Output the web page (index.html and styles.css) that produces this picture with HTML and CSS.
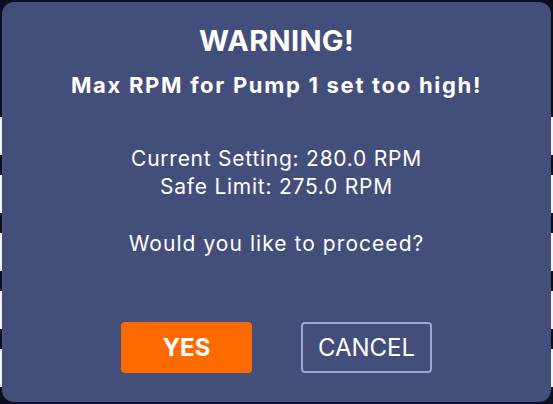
FILE: index.html
```html
<!DOCTYPE html>
<html lang="en">
<head>
  <meta charset="UTF-8">
  <meta name="viewport" content="width=device-width, initial-scale=1.0">
  <title>Pump Warning</title>
  <link rel="stylesheet" href="styles.css">
</head>
<body>
  <div class="backdrop">
    <div class="row dark"></div>
    <div class="row light short"></div>
    <div class="row dark"></div>
    <div class="row light"></div>
    <div class="row dark"></div>
    <div class="row light"></div>
    <div class="row dark"></div>
    <div class="row light"></div>
    <div class="row dark"></div>
    <div class="row light"></div>
  </div>

  <div class="modal" id="warningModal">
    <h1 class="title">WARNING!</h1>
    <h2 class="subtitle">Max RPM for Pump 1 set too high!</h2>
    <p class="detail first">Current Setting: 280.0 RPM</p>
    <p class="detail">Safe Limit: 275.0 RPM</p>
    <p class="detail question">Would you like to proceed?</p>
    <div class="actions">
      <button class="btn btn-yes" id="yesButton">YES</button>
      <button class="btn btn-cancel" id="cancelButton">CANCEL</button>
    </div>
  </div>
</body>
</html>
```

FILE: styles.css
```css
body {
  font-family: Inter, "Liberation Sans", sans-serif;
  background-color: #0c0f1f;
  margin: 0;
  padding: 0;
  width: 553px;
  height: 404px;
  position: relative;
  overflow: hidden;
}

.backdrop {
  display: flex;
  flex-direction: column;
  padding-top: 97px;
}

.row.short {
  height: 33px;
}

.row.dark {
  height: 20px;
  background-color: #0c0f1f;
}

.row.light {
  height: 38px;
  background-color: #f4f4f6;
}

.modal {
  position: absolute;
  top: 2px;
  left: 2px;
  right: 2px;
  bottom: 2px;
  background-color: #434f7a;
  border-radius: 12px;
  color: #fff;
  text-align: center;
  display: flex;
  flex-direction: column;
  align-items: center;
  padding-top: 21px;
  box-sizing: border-box;
}

.title {
  font-size: 29px;
  font-weight: 700;
  line-height: 36px;
  letter-spacing: 0.3px;
  margin: 0;
}

.subtitle {
  font-size: 22px;
  font-weight: 700;
  line-height: 28px;
  letter-spacing: 1.7px;
  margin: 12px 0 0;
}

.detail {
  font-size: 21px;
  line-height: 28px;
  letter-spacing: 0.75px;
  margin: 0;
}

.detail.first {
  margin-top: 46px;
}

.detail.question {
  margin-top: 29px;
  letter-spacing: 1.05px;
}

.actions {
  display: flex;
  gap: 49px;
  margin-top: 64px;
}

.btn {
  width: 131px;
  height: 51px;
  font-family: Inter, "Liberation Sans", sans-serif;
  font-size: 24px;
  color: #fff;
  border-radius: 4px;
  box-sizing: border-box;
  cursor: pointer;
  padding: 0;
}

.btn-yes {
  background-color: #ff6a00;
  border: none;
  font-weight: 700;
}

.btn-cancel {
  background-color: transparent;
  border: 2px solid #9aa5d8;
  font-weight: 400;
}
```
